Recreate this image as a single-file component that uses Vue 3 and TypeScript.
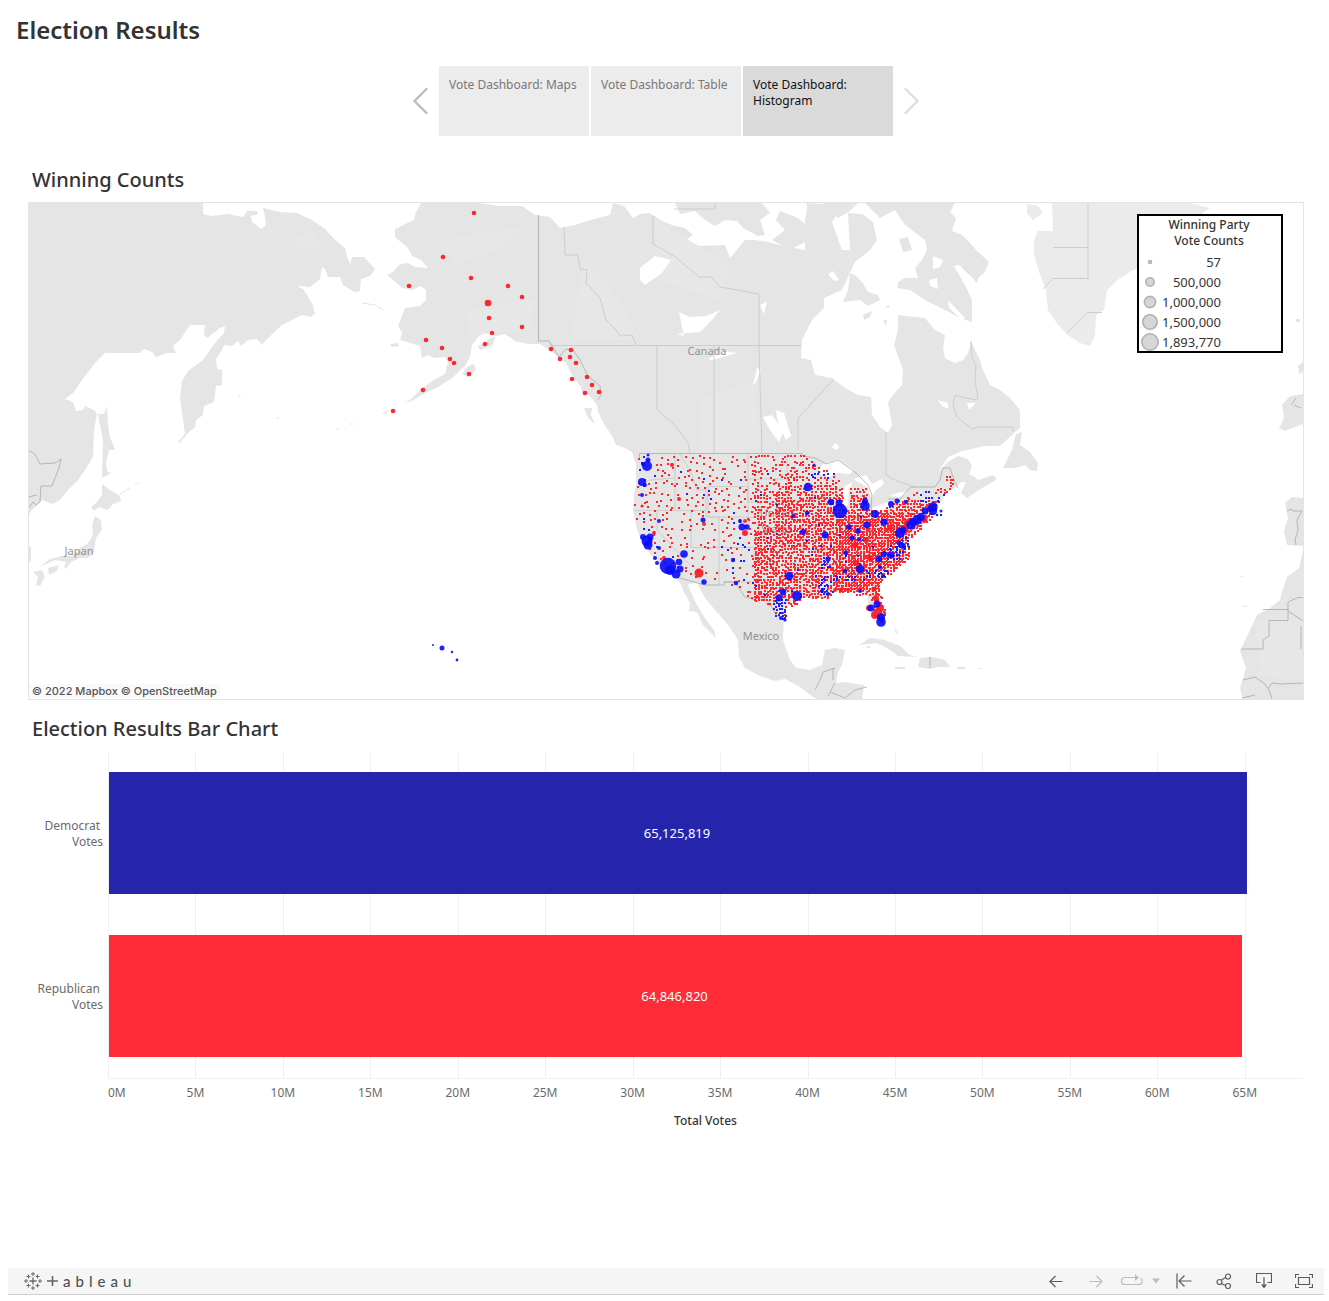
<script setup lang="ts">
type Point = [number, number]
type Dot = [number, number, number]

interface Story { title: string; active: boolean }
interface LegendItem { label: string; r: number }
interface Bar { name: string[]; label: string; votes: number; color: string }

const stories: Story[] = [
  { title: 'Vote Dashboard: Maps', active: false },
  { title: 'Vote Dashboard: Table', active: false },
  { title: 'Vote Dashboard: Histogram', active: true },
]

const legend: LegendItem[] = [
  { label: '57', r: 1.5 },
  { label: '500,000', r: 4.2 },
  { label: '1,000,000', r: 5.6 },
  { label: '1,500,000', r: 7.2 },
  { label: '1,893,770', r: 8.2 },
]

const axisMax = 68330000
const bars: Bar[] = [
  { name: ['Democrat', 'Votes'], label: '65,125,819', votes: 65125819, color: '#2525ab' },
  { name: ['Republican', 'Votes'], label: '64,846,820', votes: 64846820, color: '#ff2b36' },
]
const ticks = Array.from({ length: 14 }, (_, i) => `${i * 5}M`)
const barWidth = (b: Bar) => `${(b.votes / axisMax) * 100}%`

/* Outline of the contiguous states, used to place the county marks */
const usOutline: Point[] = [
  [637, 454], [802, 454], [815, 463], [835, 473], [843, 486], [843, 508], [850, 508], [847, 490],
  [858, 481], [866, 488], [868, 507], [878, 510], [890, 502], [908, 496], [922, 487], [938, 487],
  [945, 470], [953, 472], [957, 486], [945, 492], [938, 500], [932, 515], [920, 527], [910, 538],
  [909, 556], [896, 567], [884, 576], [878, 585], [882, 602], [885, 615], [880, 622], [872, 612],
  [870, 596], [860, 594], [850, 592], [830, 593], [828, 598], [805, 597], [797, 602], [786, 608],
  [786, 620], [776, 616], [769, 604], [757, 599], [748, 602], [738, 587], [725, 584], [705, 584],
  [678, 575], [660, 566], [648, 550], [637, 528], [633, 508], [636, 490],
]

function inside(x: number, y: number, poly: Point[]): boolean {
  let hit = false
  for (let i = 0, j = poly.length - 1; i < poly.length; j = i++) {
    const [xi, yi] = poly[i]
    const [xj, yj] = poly[j]
    if (yi > y !== yj > y && x < ((xj - xi) * (y - yi)) / (yj - yi) + xi) hit = !hit
  }
  return hit
}

let seed = 20161108
function rand(): number {
  seed = (seed * 1664525 + 1013904223) % 4294967296
  return seed / 4294967296
}

/* Chance that a county at this place is blue */
function blueShare(x: number, y: number): number {
  const near = (cx: number, cy: number, rx: number, ry: number) =>
    ((x - cx) / rx) ** 2 + ((y - cy) / ry) ** 2 < 1
  if (near(925, 494, 9, 9)) return 0.75
  if (near(824, 575, 5, 20)) return 0.6
  if (near(848, 577, 20, 4)) return 0.4
  if (near(876, 573, 14, 6)) return 0.35
  if (near(894, 552, 16, 8)) return 0.35
  if (near(903, 543, 6, 8)) return 0.45
  if (near(778, 610, 12, 14)) return 0.7
  if (near(737, 548, 12, 28)) return 0.45
  if (near(640, 535, 12, 22)) return 0.5
  if (near(644, 472, 9, 18)) return 0.5
  if (near(938, 499, 10, 7)) return 0.6
  if (near(828, 475, 20, 6)) return 0.35
  if (x < 750) return 0.05
  return 0.02
}

const redMarks: string[] = []
const blueMarks: string[] = []
function mark(x: number, y: number) {
  const path = `M${Math.round(x)} ${Math.round(y)}h2v2h-2z`
  ;(rand() < blueShare(x, y) ? blueMarks : redMarks).push(path)
}
/* Sparse counties of the west */
for (let y = 455; y < 604; y += 6) {
  for (let x = 634; x < 760; x += 6) {
    const px = x + rand() * 5
    const py = y + rand() * 5
    const keep = px > 655 && px < 720 && py > 515 ? 0.5 : 0.82
    if (px < 756 && inside(px, py, usOutline) && rand() < keep) mark(px, py)
  }
}
/* Tightly spaced counties of the plains and the east */
for (let y = 455; y < 625; y += 3) {
  for (let x = 754; x < 960; x += 3) {
    let keep = 0.94
    if (y < 490 && x < 778) keep = 0.42
    else if (y < 480) keep = 0.5
    else if (x < 775 && y < 530) keep = 0.7
    else if (y < 492) keep = 0.75
    if (x > 908 && y < 500) keep = 0.42
    if (x > 832 && x < 904 && y > 512 && y < 590) keep = 0.98
    const wobble = rand() < 0.35 ? 1 : 0
    if (!inside(x, y, usOutline)) continue
    if (rand() < keep) mark(x + wobble, y + (rand() < 0.3 ? 1 : 0))
    const second = keep > 0.96 ? 0.85 : keep > 0.9 ? 0.25 : 0
    if (rand() < second) mark(x + 1, y + 1)
  }
}
const redCounties = redMarks.join('')
const blueCounties = blueMarks.join('')

const redDots: Dot[] = [
  [474, 213, 2.3], [443, 257, 2.3], [409, 286, 2.3], [471, 278, 2.3], [508, 286, 2.3], [522, 297, 2.3],
  [488, 303, 3.3], [489, 318, 2.3], [522, 327, 2.3], [492, 333, 2.3], [485, 344, 2.3], [426, 340, 2.3],
  [442, 348, 2.3], [450, 359, 2.3], [454, 363, 2.3], [469, 374, 2.3], [423, 390, 2.3], [393, 411, 2.3],
  [551, 349, 2.3], [560, 359, 2.3], [571, 350, 2.3], [570, 357, 2.3], [576, 363, 2.3], [572, 379, 2.3],
  [587, 377, 2.3], [592, 385, 2.3], [585, 393, 2.3], [599, 392, 2.3],
  [699, 573, 4.5], [745, 533, 3], [745, 521, 2], [672, 465, 2], [679, 499, 2], [704, 524, 2], [642, 506, 1.5],
  [654, 533, 2], [664, 558, 2], [869, 608, 3], [875, 615, 4], [880, 608, 4], [876, 598, 3], [924, 519, 3.5],
  [905, 528, 3.5], [890, 528, 3], [841, 590, 2], [835, 590, 2], [848, 590, 2], [855, 545, 3], [866, 540, 3],
  [870, 558, 3], [856, 563, 3], [874, 589, 2.5], [907, 522, 3],
]

const blueDots: Dot[] = [
  [647, 466, 5], [648, 460, 2.5], [643, 464, 2], [642, 482, 4], [645, 485, 2], [642, 495, 2], [648, 455, 1.5],
  [659, 521, 2], [647, 541, 5.5], [648, 545, 4.5], [643, 537, 3], [650, 537, 3.5], [659, 548, 2], [655, 558, 2],
  [657, 563, 2], [668, 566, 8.3], [670, 570, 5], [676, 574, 4.5], [679, 562, 3.3], [680, 569, 3.5],
  [684, 554, 3.8], [704, 582, 2.7], [736, 583, 2.3], [703, 520, 2.5], [740, 521, 2], [742, 527, 3.5],
  [747, 527, 2.7], [733, 560, 2.2], [808, 487, 4.3], [789, 576, 4.3], [797, 596, 5], [783, 592, 3.3],
  [779, 598, 3.5], [781, 618, 2], [785, 620, 1.6], [803, 532, 3], [793, 516, 2], [807, 513, 2.2],
  [840, 511, 7.3], [839, 503, 3.4], [831, 502, 3.2], [825, 535, 3.5], [865, 506, 4.8], [865, 501, 3],
  [875, 514, 4], [884, 522, 3.6], [867, 525, 3.4], [849, 527, 2.8], [858, 531, 2.8], [852, 538, 2.6],
  [859, 539, 2], [891, 504, 3], [897, 501, 2.5], [906, 502, 2], [846, 553, 2.4], [828, 559, 2.6],
  [860, 569, 4.3], [845, 571, 2.3], [879, 559, 3.2], [884, 554, 3], [891, 555, 3.6], [900, 533, 5],
  [903, 530, 3.5], [911, 525, 4.8], [913, 522, 4], [917, 520, 4.8], [921, 517, 4], [925, 511, 3.4],
  [933, 507, 4.7], [933, 511, 4], [930, 508, 3], [937, 515, 1.3], [941, 511, 1.5], [941, 515, 1.2], [822, 591, 2],
  [828, 594, 2], [860, 591, 2], [877, 604, 3.5], [871, 608, 3.5], [881, 617, 4], [881, 622, 4.8],
  [899, 543, 2.4], [903, 546, 3], [880, 567, 2], [883, 576, 2], [814, 465, 1.5],
  [433, 645, 1], [442, 648, 2.5], [452, 652, 1.2], [457, 660, 1.4],
]
</script>

<template>
  <main class="page">
    <h1>Election Results</h1>

    <nav class="stories" aria-label="Story points">
      <button class="arrow" type="button" aria-label="Previous">
        <svg width="16" height="28" viewBox="0 0 16 28"><path d="M14.500 2L2.500 14l12 12" stroke="#bdbdbd" /></svg>
      </button>
      <button v-for="s in stories" :key="s.title" type="button" class="story" :class="{ active: s.active }">
        {{ s.title }}
      </button>
      <button class="arrow" type="button" aria-label="Next">
        <svg width="16" height="28" viewBox="0 0 16 28"><path d="M1.500 2L13.500 14L1.500 26" stroke="#dedede" /></svg>
      </button>
    </nav>

    <section class="panel">
      <h2>Winning Counts</h2>
      <div class="map">
        <svg class="map-art" viewBox="29 203 1274 496" role="img" aria-label="Map of winning party vote counts by county">
          <g class="land">
            <path d="M28 203H203V214L211 216L228 214L243 217L247 211L257 211L258 214L251 216L252 222L261 229L266 225L265 216L263 208L280 212L297 213L312 220L325 229L334 239L345 248L347 256L350 264L352 257L364 257L375 269L370 276L361 279L360 291L354 292L343 285L340 277L328 277L325 269L322 267L320 279L310 287L297 286L303 289L307 295L313 305L315 314L311 317L302 315L282 325L265 341L262 345L257 339L248 340L241 346L238 341L232 346L224 345L222 350L216 359L217 369L222 370V385L216 386L214 402L204 406L203 415L196 420L195 427L187 434L180 443L178 442L185 434L180 398L182 381L188 371L203 360L215 343L224 333L225 326L220 328L207 338L204 335L205 325L190 325L180 340L173 346L176 353L167 353L156 357L152 352L144 349L140 353L126 353L105 353L95 363L82 380L73 393L65 399L73 402L76 411L83 410L85 406L94 410L97 414L94 430L93 457L85 470L78 480L68 490L60 500L52 504L42 500L36 506L30 512L28 520Z" />
            <path d="M98 414L104 414L107 406L108 425L110 437L115 450L109 450L106 462L107 471L111 473L102 478L103 440L100 425Z" />
            <path d="M102 484L110 490L120 496L121 501L113 504L108 510L99 507L94 511L91 507L97 502L102 495Z" />
            <path d="M95 516L101 520L102 530L96 538L94 552L88 558L80 558L71 562L66 569L64 567L66 562L55 560L40 567L50 559L62 556L72 556L80 548L88 543L93 535L92 525Z" />
            <path d="M48 568L59 565L57 571L49 575ZM33 572L42 570L45 577L40 586L36 585L38 577ZM28 543L31 548L31 560L28 564Z" />
            <path d="M120 494L130 488M135 485L140 482M238 395l3 3M276 418h3M336 429h3M350 424h3M362 303L375 305L383 310" stroke="#e5e5e5" fill="none" />
            <path d="M421 203L416 212L414 220L395 229L395 237L408 248L412 256L421 260L428 268L415 267L408 263L400 264L393 272L387 275L393 280L402 288L412 290L421 286L426 290L426 300L420 306L405 308L402 316L398 326L402 333L400 340L410 343L420 346L422 358L428 355L435 358L445 357L448 362L445 374L432 381L420 390L410 400L404 403L412 401L425 393L440 386L452 378L465 366L470 357L472 345L478 337L488 331L496 336L492 346L480 350L478 346L486 342L490 338L505 334L515 341L528 344L540 344L552 352L566 363L572 375L580 386L590 396L597 405L598 412L604 424L612 436L616 445L625 448L632 452L636 465L636 483L634 495L633 510L635 520L637 530L642 540L648 551L655 560L661 566L670 570L676 576L680 583L684 592L690 603L689 611L697 612L703 625L711 633L716 638L714 630L705 618L697 605L690 590L688 584L697 583L705 598L715 610L728 625L738 640L739 657L745 668L760 676L775 681L785 679L800 687L813 697L820 700L862 700L864 685L845 682L836 683L838 672L842 665L845 650L835 648L825 650L822 665L810 670L796 668L790 660L783 640L784 610L792 602L805 597L818 597L828 600L830 593L850 590L862 593L868 596L868 604L872 614L880 622L884 615L880 600L876 590L878 583L885 573L898 565L908 556L905 545L908 538L918 528L927 522L935 508L942 500L945 494L955 488L961 482L966 482L961 493L967 498L979 490L997 479L993 475L978 480L975 477L969 474L972 466L968 459L958 456L948 462L938 472L948 457L962 451L985 446L1000 446L1012 435L1020 428L1020 410L1010 398L1000 390L990 385L983 370L980 360L971 341L968 353L963 360L955 363L945 358L943 348L945 335L935 330L925 318L915 317L898 315L898 330L894 345L903 370L902 385L893 395L888 402L892 425L888 433L880 427L872 415L871 397L858 395L845 388L832 378L815 375L811 360L801 358L802 340L812 320L824 308L824 298L842 290L849 275L855 262L870 250L877 240L873 222L862 214L848 213L850 250L842 250L832 222L822 232L818 214L808 203L805 220L805 250L795 248L780 245L768 242L755 240L745 240L730 258L725 245L700 246L684 241L693 235L685 228L672 225L662 221L650 213L640 214L633 218L624 206L613 203L610 215L590 220L575 225L560 228L550 217L535 215L522 206L500 206L480 203Z" />
            <path d="M675 203L680 214L695 211L705 220L715 226L725 220L737 221L743 228L758 236L765 235L760 220L770 213L762 203ZM772 240L790 250L805 242L806 225L798 218L780 211L776 220L785 230ZM806 203L817 230L824 238L830 225L840 210L848 205ZM740 246L755 242L768 243L780 252L745 262L740 252Z" />
            <path d="M823 203L838 218L850 211L858 203ZM865 203L955 203L950 212L956 218L952 231L962 235L970 243L976 250L989 262L985 272L978 278L977 283L967 275L960 265L954 266L965 285L972 300L972 322L960 318L945 310L925 300L910 290L897 288L898 282L905 278L918 278L915 268L922 260L927 250L925 240L905 225L895 210L880 218Z" />
            <path d="M850 273L848 290L843 302L860 300L868 306L880 300L878 295L868 292L862 282L855 275ZM863 315L872 311L870 317L864 320ZM883 320L887 320L886 326ZM899 239L908 237L912 250L903 252ZM885 307l4 -2v3z" />
            <path d="M1003 468L1012 450L1016 434L1022 432L1020 445L1030 452L1038 463L1037 471L1030 470L1025 465L1015 468ZM980 481l10 -3 5 3-8 4z" />
            <path d="M468 366L474 364L476 370L468 377L462 374ZM390 344l8-1 1 3-7 1zM382 414l8-5-4 5zM584 408L592 408L591 415L595 424L588 418ZM570 355L580 364L584 378L577 380L570 365ZM583 384L588 390L584 396L581 390Z" />
            <path d="M859 645L870 638L885 640L900 646L910 655L917 657L898 656L890 650L877 643ZM920 658L932 657L945 660L950 667L938 667L930 669L918 667ZM895 667h10v2h-10zM957 667h8v2h-8zM979 668h3v1h-3zM894 627l4 6-2 1zM867 646h3v2h-3z" />
            <path d="M1282 405L1290 396L1303 394V424L1285 431L1279 428L1284 418ZM1298 366l5-4v10l-4 2zM1296 319h4v3h-4zM1285 503L1292 497L1303 498V546L1287 545L1284 532L1288 518ZM1303 550L1299 568L1287 577L1282 592L1280 600L1270 608L1257 615L1250 630L1240 651L1246 668L1240 688L1243 700H1303ZM1241 576h2v1h-2zM1243 605l6 2h-5z" />
          </g>
          <path class="ice" d="M1052 203L1053 231L1038 231L1034 240L1034 255L1040 275L1046 290L1048 310L1058 325L1068 335L1080 343L1090 346L1095 335L1096 315L1104 310L1107 290L1120 278L1137 268L1150 255L1180 235L1200 215L1210 208L1190 203ZM1027 204L1038 206L1043 213L1033 220L1027 213Z" />
          <g class="relief">
            <path d="M700 400L755 380L760 448L700 450ZM655 220L730 265L720 300L660 280ZM585 260L620 300L640 340L570 338ZM440 240L530 225L500 250L455 265ZM465 310L535 300L530 330L470 335ZM290 240l25-8 5 14-20 5zM155 232l10-4v8zM170 228l10 0-2 12zM1255 620H1303V680L1260 676Z" />
          </g>
          <g class="water">
            <path d="M640 268L655 256L671 260L662 273L645 285L640 280ZM676 334L684 336L679 312L690 317L706 316L720 310L712 320L700 332ZM708 359L722 351L737 353L712 360ZM753 385L757 368L761 370L756 382ZM763 417L772 415L783 432L779 442L770 430ZM776 410L784 413L791 436L786 440L778 424ZM760 305l7-3-3 12zM832 448l3-5 4 3-2 4zM938 400l10 3 0 6-6-3zM967 403l9 0-7 7z" />
            <path d="M815 475L823 464L838 459L854 470L850 474L838 473L830 477L822 474ZM842 494L845 486L853 482L849 490L847 508L841 508ZM853 479L866 475L872 484L882 479L884 484L875 491L872 499L867 487ZM872 508L885 503L898 501L889 508L875 513ZM889 496L900 492L908 493L900 497ZM933 256L943 260L940 267L933 269ZM929 280L937 278L938 289L930 286ZM828 274L833 271L839 280L834 281ZM956 264L964 270L975 280L970 285ZM948 300L965 318L963 321L949 308Z" />
          </g>
          <g class="state-lines">
            <path d="M550 345.500H801M564 227L565 255H578L580 269L587 270L586 283L600 298L606 320L617 331L620 336L632 335L636 345M653 216V244L674 256L699 277H711L720 287L759 294V345L762 453M657 345V410L675 425L688 443L690 453M714 345V453M833 380L798 418V450M886 432V475L895 480L915 487M971 341L972 357L976 365L975 380L978 400L965 398L955 395L953 405L957 417L972 429L978 427H1013V432M674 209H715V203" />
            <path d="M640 484L650 480L675 478M675 453V510M634 510.500H706M657 510V530L690 565M691 510V547M706 487V517H719M691 547.500H760M719 517V584M708 486.500H748V517H708ZM748 517.500H759V547M754 547V582H724M748 453V502H790M679 453L690 470L697 490L706 490M787 453V500M803 500V580M748 479H787M790 500H820M800 550H850M782 563H805M811 575V595M841 555V590M856 560V590M841 525V550M862 515V540" />
            <path d="M1088 203V278.500H1053L1043 289M1053 247.500H1088M1066 334L1088 312.500H1102" />
          </g>
          <g class="country-lines">
            <path d="M538.500 215V341H549L552 346L559 357L566 349L573 350L580 360L588 376L600 386L601 395L598 400M639.500 458V453.500H802L803 456L815 458L826 464L838 460L855 472L868 485L872 495L871 510M888 499H900L911 487H935L940 480L943 468L950 468L954 480L958 488M676 577L705 585H724V582H735L745 597L755 600L758 595L768 600L776 615L785 620" />
            <path d="M28 450L35 454L40 464L55 463L61 459L59 468L52 486L41 486L40 502L36 505L33 502L28 509M28 497L37 495M815 690L820 680L823 672L835 668M833 668V680M828 696L835 683M830 692L845 698L855 690L867 687M930 657V668M1287 511L1291 509L1293 511L1302 511L1297 520L1298 530L1295 540L1296 545M1263 609.500H1288V620.500H1269V636L1263 640V649H1241M1288 610V602L1298 597.500H1303M1288 611L1303 621M1301 626V649M1243 680L1255 677L1265 684L1269 690L1272 699M1269 688L1272 683L1280 684L1303 683M1242 698L1255 695M1291 405L1296 398M1294 405L1301 408" />
          </g>
          <g class="places">
            <text x="707" y="355">Canada</text>
            <text x="761" y="640">Mexico</text>
            <text x="79" y="555">Japan</text>
            <text x="777" y="517">United</text>
            <text x="777" y="533">States</text>
          </g>
          <path class="red" :d="redCounties" />
          <path class="blue" :d="blueCounties" />
          <circle v-for="(d, i) in redDots" :key="'r' + i" class="red" :cx="d[0]" :cy="d[1]" :r="d[2]" />
          <circle v-for="(d, i) in blueDots" :key="'b' + i" class="blue" :cx="d[0]" :cy="d[1]" :r="d[2]" />
        </svg>
        <div class="legend">
          <p class="legend-title">Winning Party<br />Vote Counts</p>
          <ul>
            <li v-for="l in legend" :key="l.label">
              <svg width="20" height="20" viewBox="0 0 20 20"><circle cx="10" cy="10" :r="l.r" /></svg>
              <span>{{ l.label }}</span>
            </li>
          </ul>
        </div>
        <div class="credit"><a href="#">© 2022 Mapbox</a><a href="#">© OpenStreetMap</a></div>
      </div>
    </section>

    <section class="panel chart-panel">
      <h2>Election Results Bar Chart</h2>
      <div class="chart">
        <div class="row-names">
          <div v-for="b in bars" :key="b.label" class="row-name">
            <span v-for="n in b.name" :key="n">{{ n }}</span>
          </div>
        </div>
        <div class="plot">
          <div class="lines"><i v-for="t in ticks" :key="t"></i></div>
          <div class="bars">
            <div v-for="b in bars" :key="b.label" class="bar-row">
              <div class="bar" :style="{ width: barWidth(b), background: b.color }">{{ b.label }}</div>
            </div>
          </div>
        </div>
        <div class="ticks">
          <div v-for="t in ticks" :key="t"><span>{{ t }}</span></div>
        </div>
        <p class="axis-title">Total Votes</p>
      </div>
    </section>

    <footer class="toolbar">
      <a class="logo" href="#" aria-label="tableau">
        <svg width="18" height="18" viewBox="0 0 18 18">
          <path d="M9 5.500v7M5.500 9h7" stroke-width="1.300" />
          <path d="M9 0v4M7 2h4M9 14v4M7 16h4M2 7v4M0 9h4M16 7v4M14 9h4M4.500 2.500v4M2.500 4.500h4M13.500 2.500v4M11.500 4.500h4M4.500 11.500v4M2.500 13.500h4M13.500 11.500v4M11.500 13.500h4" />
        </svg>
        <svg width="11" height="12" viewBox="0 0 11 12"><path d="M5.500 1v10M0 6h11" stroke-width="1.600" /></svg>
        <span>a</span><span>b</span><span>l</span><span>e</span><span>a</span><span>u</span>
      </a>
      <div class="tools">
        <button type="button" aria-label="Undo">
          <svg width="14" height="14" viewBox="0 0 14 14"><path d="M13.500 7.500H1M6.500 2L1 7.500L6.500 13" /></svg>
        </button>
        <button type="button" class="off" aria-label="Redo" disabled>
          <svg width="14" height="14" viewBox="0 0 14 14"><path d="M.5 7.500H13M7.500 2L13 7.500L7.500 13" /></svg>
        </button>
        <button type="button" class="off replay" aria-label="Replay" disabled>
          <svg width="22" height="14" viewBox="0 0 22 14"><path d="M14 3.500H4a3.500 3.500 0 0 0 0 7h14a3.500 3.500 0 0 0 1.500-6.500" /><path class="solid" d="M14 0l4 3.500L14 7z" /></svg>
        </button>
        <button type="button" class="off drop" aria-label="Replay speed" disabled>
          <svg width="8" height="6" viewBox="0 0 8 6"><path class="solid" d="M0 .5h8L4 5.500z" /></svg>
        </button>
        <button type="button" aria-label="Revert">
          <svg width="16" height="16" viewBox="0 0 16 16"><path d="M1 .5v15M15.500 8H3M8.500 2.500L3 8L8.500 13.500" /></svg>
        </button>
        <button type="button" aria-label="Share">
          <svg width="16" height="16" viewBox="0 0 16 16"><path d="M5.500 7L9.500 4.500M5 10.500L9.500 12.500" /><circle cx="3.500" cy="9" r="2.500" /><circle cx="12" cy="3.500" r="2.500" /><circle cx="12" cy="13" r="2.500" /></svg>
        </button>
        <button type="button" aria-label="Download">
          <svg width="16" height="16" viewBox="0 0 16 16"><path d="M4.500 9.500H.5V.5h15v9h-4M8 4v9" /><path class="solid" d="M5 11.500h6L8 15.500z" /></svg>
        </button>
        <button type="button" aria-label="Full Screen">
          <svg width="18" height="14" viewBox="0 0 18 14"><path d="M3.500 3.500h11v7h-11zM.5 4V.5H4M14 .5h3.500V4M17.500 10v3.500H14M4 13.500H.5V10" /></svg>
        </button>
      </div>
    </footer>
  </main>
</template>

<style>
body {
  margin: 0;
  background: #fff;
}
</style>

<style scoped>
* {
  box-sizing: border-box;
}
.page {
  min-height: 100vh;
  display: flex;
  flex-direction: column;
  font-family: 'Noto Sans', 'Open Sans', sans-serif;
  font-size: 12px;
  line-height: 16px;
  color: #333;
}
h1, h2, p, ul {
  margin: 0;
  padding: 0;
}
h1 {
  padding: 14px 16px 0;
  font-size: 24px;
  font-weight: 600;
  line-height: 32px;
}
h2 {
  padding: 0 4px;
  font-size: 20px;
  font-weight: 500;
  line-height: 28px;
}
button {
  border: 0;
  padding: 0;
  background: none;
  font: inherit;
  color: inherit;
}
svg {
  display: block;
}
.stories {
  display: flex;
  justify-content: center;
  gap: 2px;
  margin: 20px 0 30px;
  padding-left: 3px;
}
.arrow {
  display: flex;
  align-items: center;
  justify-content: center;
  width: 34px;
  height: 70px;
}
.arrow svg {
  fill: none;
  stroke-width: 2.4;
  stroke-linecap: round;
}
.story {
  display: flex;
  width: 150px;
  height: 70px;
  padding: 11px 10px;
  background: #ececec;
  color: #787878;
  text-align: left;
}
.story.active {
  background: #dadada;
  color: #111;
}
.panel {
  margin: 0 25px 0 28px;
}
.map {
  position: relative;
  margin-top: 8px;
  border: 1px solid #e4e4e4;
}
.map-art {
  width: 100%;
  height: auto;
}
.land {
  fill: #e5e5e5;
}
.ice {
  fill: #ebebeb;
}
.relief {
  fill: #e7e7e7;
}
.water {
  fill: #fff;
}
.state-lines, .country-lines {
  fill: none;
  stroke: #c6c6c6;
  stroke-width: 0.8;
}
.country-lines {
  stroke: #aaa;
}
.places {
  font-size: 11px;
  fill: #929292;
  text-anchor: middle;
}
.red {
  fill: #ff1a20;
  fill-opacity: 0.93;
}
.blue {
  fill: #0a0aff;
  fill-opacity: 0.9;
}
.legend {
  position: absolute;
  top: 11px;
  right: 20px;
  width: 146px;
  height: 139px;
  padding-left: 1px;
  border: 2px solid #000;
  background: #fff;
  overflow: hidden;
}
.legend-title {
  padding: 1px 3px 3px 0;
  font-weight: 500;
  text-align: center;
}
.legend ul {
  list-style: none;
}
.legend li {
  display: flex;
  align-items: center;
  width: 81px;
  height: 20px;
  justify-content: space-between;
  font-size: 13px;
}
.legend circle {
  fill: #d6d6d6;
  stroke: #b2b2b2;
  stroke-width: 1.6;
}
.credit {
  position: absolute;
  left: 0;
  bottom: 1px;
  display: flex;
  gap: 3px;
  padding: 0 3px;
  background: #fafafa;
  font-family: Inter, sans-serif;
  font-size: 11px;
  font-weight: 500;
  line-height: 14px;
}
.credit a {
  color: #555;
  text-decoration: none;
}
.chart-panel {
  margin-top: 15px;
  margin-right: 26px;
}
.chart {
  display: grid;
  grid-template-columns: 80px 1fr;
  margin-top: 9px;
  color: #6b6b6b;
}
.row-name {
  display: flex;
  flex-direction: column;
  justify-content: center;
  height: 163px;
  padding-right: 5px;
  text-align: right;
}
.row-name span:first-child {
  padding-right: 3px;
}
.plot {
  display: grid;
  border-bottom: 1px solid #f0f0f0;
}
.lines, .bars {
  grid-area: 1 / 1;
}
.lines, .ticks {
  display: grid;
  grid-template-columns: repeat(13, minmax(0, 5fr)) minmax(0, 3.33fr);
}
.lines i {
  border-left: 1px solid #f0f0f0;
}
.bar-row {
  height: 163px;
  padding: 20px 0 0 1px;
}
.bar {
  display: flex;
  align-items: center;
  justify-content: center;
  height: 122px;
  padding-right: 2px;
  color: #fff;
  font-size: 13px;
}
.ticks {
  grid-column: 2;
  margin-top: 6px;
}
.ticks span {
  display: block;
  width: 40px;
  margin-left: -20px;
  text-align: center;
}
.ticks div:first-child span {
  margin-left: 0;
  text-align: left;
}
.axis-title {
  grid-column: 2;
  margin-top: 12px;
  color: #333;
  font-weight: 500;
  text-align: center;
}
.toolbar {
  display: flex;
  align-items: center;
  justify-content: space-between;
  height: 27px;
  margin: auto 5px 6px 8px;
  border-bottom: 1px solid #cfcfcf;
  background: #f5f5f5;
}
.logo {
  display: flex;
  align-items: center;
  gap: 5px;
  padding-left: 16px;
  color: #505050;
  font-family: Lato, sans-serif;
  font-size: 15px;
  font-weight: 500;
  text-decoration: none;
}
.logo svg {
  fill: none;
  stroke: #666;
  stroke-width: 1;
}
.tools {
  display: flex;
}
.tools button {
  display: flex;
  align-items: center;
  justify-content: center;
  width: 40px;
  height: 26px;
  color: #5c5c5c;
}
.tools .off {
  color: #bdbdbd;
}
.tools .replay {
  width: 32px;
}
.tools .drop {
  width: 16px;
}
.tools svg {
  fill: none;
  stroke: currentColor;
  stroke-width: 1.2;
}
.tools .solid {
  fill: currentColor;
  stroke: none;
}
</style>
